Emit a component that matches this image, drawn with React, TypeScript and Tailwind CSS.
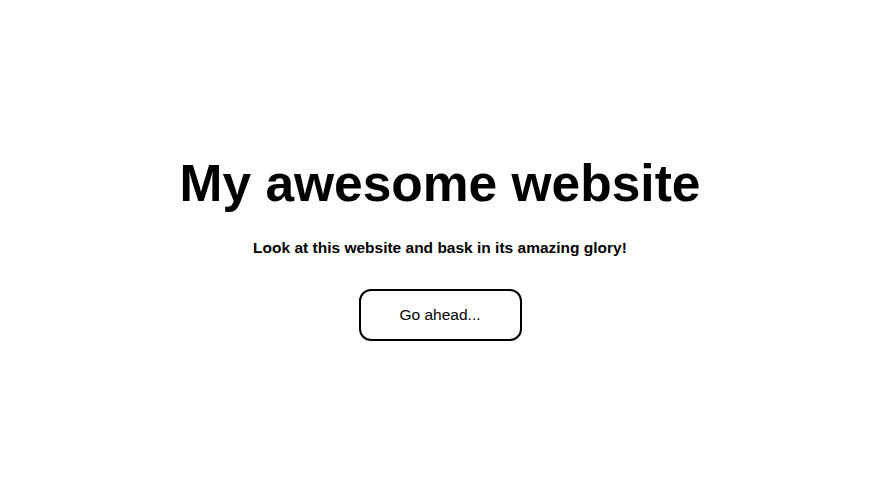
export default function App() {
  return (
    <div className="flex h-[495px] w-full flex-col items-center justify-center bg-white pt-[4px] font-['Liberation_Sans',Arial,sans-serif] text-black">
      <h1 className="text-[51.5px] font-bold leading-none">My awesome website</h1>
      <p className="mt-[30px] text-[15.5px] font-bold leading-none">
        Look at this website and bask in its amazing glory!
      </p>
      <button className="mt-[34px] h-[52px] w-[163px] rounded-[12px] border-2 border-black text-[15.5px]">
        Go ahead...
      </button>
    </div>
  );
}
